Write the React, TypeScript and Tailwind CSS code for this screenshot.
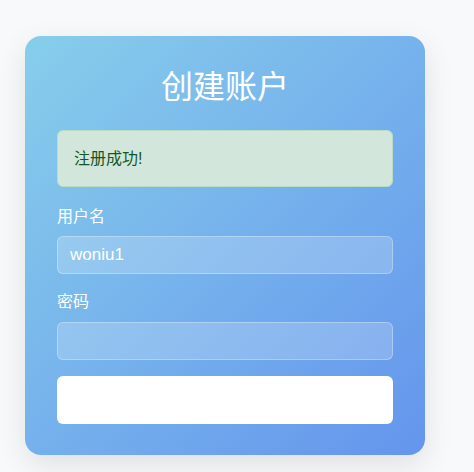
import React, { useState } from 'react';

const FONT = "font-['Liberation_Sans','Noto_Sans_CJK_SC',sans-serif]";

const App: React.FC = () => {
    const [username, setUsername] = useState('woniu1');
    const [password, setPassword] = useState('');

    return (
        <div className={`min-h-[472px] bg-[#f8f9fa] pl-[25px] pt-[36px] ${FONT}`}>
            {/* Register card */}
            <div className="w-[400px] rounded-2xl bg-[linear-gradient(135deg,#87CEEB,#6495ED)] px-8 pt-8 pb-[31px] shadow-[0_10px_30px_rgba(0,0,0,0.1)]">
                <h2 className="mb-6 text-center text-[32px] leading-[38px] font-normal text-white">创建账户</h2>

                {/* Success message */}
                <div className="mb-[18px] rounded-md border border-[#b9dcc4] bg-[#d2e6dc] px-4 py-4 text-base leading-[23px] text-[#155724]">
                    注册成功!
                </div>

                <label className="mb-[7px] block text-base leading-6 text-white">用户名</label>
                <input
                    value={username}
                    onChange={e => setUsername(e.target.value)}
                    className="mb-4 block h-[38px] w-full rounded-md border border-white/30 bg-white/20 px-3 text-[17px] text-white outline-none"
                />

                <label className="mb-2 block text-base leading-6 text-white">密码</label>
                <input
                    type="password"
                    value={password}
                    onChange={e => setPassword(e.target.value)}
                    className="mb-4 block h-[38px] w-full rounded-md border border-white/30 bg-white/20 px-3 text-[17px] text-white outline-none"
                />

                <button className="block h-12 w-full rounded-md bg-white" />
            </div>
        </div>
    );
};

export default App;
